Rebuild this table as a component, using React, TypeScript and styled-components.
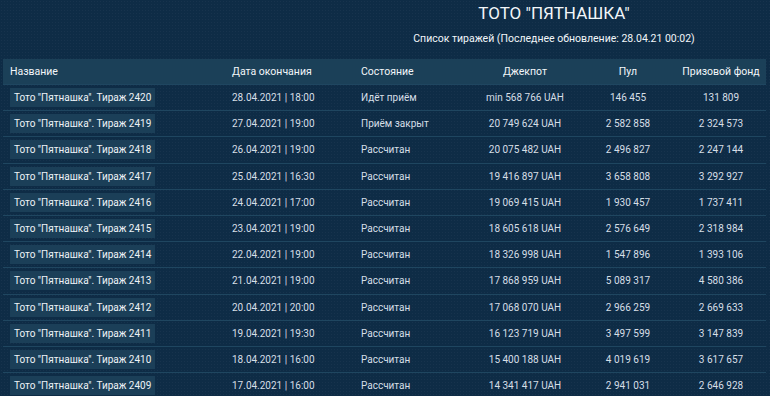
import * as React from 'react';
import styled, { createGlobalStyle } from 'styled-components';

const GlobalStyle = createGlobalStyle`
  html, body {
    margin: 0;
    padding: 0;
    background: #0e2c46;
  }
  body {
    font-family: Roboto, "Noto Sans", sans-serif;
  }
`;

const draws = [
  { no: 2420, date: '28.04.2021 | 18:00', state: 'Идёт приём', jackpot: 'min 568 766 UAH', pool: '146 455', fund: '131 809' },
  { no: 2419, date: '27.04.2021 | 19:00', state: 'Приём закрыт', jackpot: '20 749 624 UAH', pool: '2 582 858', fund: '2 324 573' },
  { no: 2418, date: '26.04.2021 | 19:00', state: 'Рассчитан', jackpot: '20 075 482 UAH', pool: '2 496 827', fund: '2 247 144' },
  { no: 2417, date: '25.04.2021 | 16:30', state: 'Рассчитан', jackpot: '19 416 897 UAH', pool: '3 658 808', fund: '3 292 927' },
  { no: 2416, date: '24.04.2021 | 17:00', state: 'Рассчитан', jackpot: '19 069 415 UAH', pool: '1 930 457', fund: '1 737 411' },
  { no: 2415, date: '23.04.2021 | 19:00', state: 'Рассчитан', jackpot: '18 605 618 UAH', pool: '2 576 649', fund: '2 318 984' },
  { no: 2414, date: '22.04.2021 | 19:00', state: 'Рассчитан', jackpot: '18 326 998 UAH', pool: '1 547 896', fund: '1 393 106' },
  { no: 2413, date: '21.04.2021 | 19:00', state: 'Рассчитан', jackpot: '17 868 959 UAH', pool: '5 089 317', fund: '4 580 386' },
  { no: 2412, date: '20.04.2021 | 20:00', state: 'Рассчитан', jackpot: '17 068 070 UAH', pool: '2 966 259', fund: '2 669 633' },
  { no: 2411, date: '19.04.2021 | 19:30', state: 'Рассчитан', jackpot: '16 123 719 UAH', pool: '3 497 599', fund: '3 147 839' },
  { no: 2410, date: '18.04.2021 | 16:00', state: 'Рассчитан', jackpot: '15 400 188 UAH', pool: '4 019 619', fund: '3 617 657' },
  { no: 2409, date: '17.04.2021 | 16:00', state: 'Рассчитан', jackpot: '14 341 417 UAH', pool: '2 941 031', fund: '2 646 928' },
];

export default function App() {
  return (
    <Page>
      <GlobalStyle />
      <Heading>
        <Title>ТОТО "ПЯТНАШКА"</Title>
        <Subtitle>Список тиражей (Последнее обновление: 28.04.21 00:02)</Subtitle>
      </Heading>
      <Table>
        <HeadRow>
          <Cell>Название</Cell>
          <Cell>Дата окончания</Cell>
          <Cell>Состояние</Cell>
          <Cell $center>Джекпот</Cell>
          <Cell $center>Пул</Cell>
          <Cell $center>Призовой фонд</Cell>
        </HeadRow>
        {draws.map((d) => (
          <Row key={d.no}>
            <Cell>
              <NameChip>Тото "Пятнашка". Тираж {d.no}</NameChip>
            </Cell>
            <Cell>{d.date}</Cell>
            <Cell>{d.state}</Cell>
            <Cell $center>{d.jackpot}</Cell>
            <Cell $center>{d.pool}</Cell>
            <Cell $center>{d.fund}</Cell>
          </Row>
        ))}
      </Table>
    </Page>
  );
}

const Page = styled.div`
  width: 770px;
  height: 396px;
  overflow: hidden;
  background-color: #0e2c46;
  background-image: radial-gradient(rgba(255, 255, 255, 0.035) 0.6px, transparent 0.8px);
  background-size: 3px 3px;
  color: #e6edf2;
`;

const Heading = styled.div`
  padding: 2px 0 0 338px;
  height: 55px;
  box-sizing: border-box;
  display: flex;
  flex-direction: column;
  align-items: center;
`;

const Title = styled.div`
  font-size: 17px;
  line-height: 22px;
  color: #f2f6f9;
`;

const Subtitle = styled.div`
  margin-top: 8px;
  font-size: 10.5px;
  line-height: 13px;
  color: #f2f6f9;
`;

const Table = styled.div`
  margin: 4px 4px 0 3px;
  display: flex;
  flex-direction: column;
`;

const columns = '222px 129px 116px 110px 96px 90px';

const HeadRow = styled.div`
  display: grid;
  grid-template-columns: ${columns};
  height: 25px;
  align-items: center;
  background: #1b4058;
  font-size: 10.5px;
  color: #f3f7fa;
`;

const Row = styled.div`
  display: grid;
  grid-template-columns: ${columns};
  height: 26.2px;
  align-items: center;
  border-top: 1px solid #1f4660;
  box-sizing: border-box;
  font-size: 10px;
  color: #d6dfe6;
`;

const Cell = styled.div<{ $center?: boolean }>`
  padding-left: ${(p) => (p.$center ? '0' : '7px')};
  text-align: ${(p) => (p.$center ? 'center' : 'left')};
  white-space: nowrap;
`;

const NameChip = styled.span`
  display: inline-block;
  padding: 3px 4px;
  background: #1b3f58;
  color: #eef3f7;
  line-height: 13px;
`;
